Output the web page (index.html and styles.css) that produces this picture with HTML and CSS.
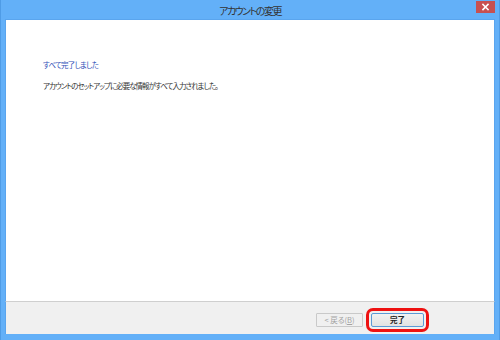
FILE: index.html
```html
<!DOCTYPE html>
<html lang="ja">
<head>
<meta charset="utf-8">
<title>アカウントの変更</title>
<link rel="stylesheet" href="styles.css">
</head>
<body>
<div class="window">
  <div class="titlebar">
    <span class="title">アカウントの変更</span>
    <svg class="close-btn" width="19" height="12" viewBox="0 0 19 12" aria-label="閉じる">
      <rect x="0" y="0" width="19" height="12" fill="#c75050"/>
      <path d="M7 3.5L12 8.5M12 3.5L7 8.5" stroke="#ffffff" stroke-width="1.6" stroke-linecap="square"/>
    </svg>
  </div>
  <div class="content">
    <h1 class="heading">すべて完了しました</h1>
    <p class="message">アカウントのセットアップに必要な情報がすべて入力されました。</p>
  </div>
  <div class="footer">
    <div class="btn btn-disabled">&lt; 戻る(<u>B</u>)</div>
    <div class="btn btn-primary">完了</div>
  </div>
</div>
</body>
</html>
```
FILE: styles.css
```css
* { box-sizing: border-box; }
html, body { margin: 0; padding: 0; }
body {
  width: 500px;
  height: 340px;
  overflow: hidden;
  font-family: "Noto Sans CJK JP", "Noto Sans", sans-serif;
  font-feature-settings: "palt";
}
.window {
  width: 500px;
  height: 340px;
  background: #63b0f8;
  border-left: 1px solid #4f9ce6;
  border-right: 1px solid #4f9ce6;
  display: flex;
  flex-direction: column;
  position: relative;
}
.titlebar {
  height: 19px;
  display: flex;
  align-items: center;
  justify-content: center;
}
.title {
  font-size: 10px;
  letter-spacing: -1.5px;
  color: #333333;
  line-height: 1;
  padding-top: 2px;
}
.close-btn {
  position: absolute;
  top: 1px;
  right: 4px;
  display: block;
}
.content {
  flex: 1;
  background: #ffffff;
  margin: 0 4px;
  padding: 39px 0 0 37px;
  border-top: 1px solid #5aa5ee;
  border-left: 1px solid #5aa5ee;
  border-right: 1px solid #5aa5ee;
}
.heading {
  margin: 0;
  font-size: 7.5px;
  letter-spacing: -0.8px;
  font-weight: normal;
  color: #2f50b8;
  line-height: 12px;
}
.message {
  margin: 9px 0 0;
  font-size: 7.5px;
  letter-spacing: -1px;
  color: #333333;
  line-height: 12px;
}
.footer {
  height: 33px;
  background: #f0f0f0;
  border-top: 1px solid #cfcfcf;
  margin: 0 4px 6px;
  border-left: 1px solid #5aa5ee;
  border-right: 1px solid #5aa5ee;
  display: flex;
  justify-content: flex-end;
  align-items: flex-start;
  padding: 11px 70px 0 0;
  gap: 8px;
}
.btn {
  height: 14px;
  font-size: 7.5px;
  line-height: 1;
  border-radius: 1px;
  display: flex;
  align-items: center;
  justify-content: center;
}
.btn-disabled {
  width: 47px;
  color: #a3a3a3;
  background: #f0f0f0;
  border: 1px solid #c9c9c9;
}
.btn-primary {
  width: 53px;
  color: #222222;
  font-weight: bold;
  background: linear-gradient(#f2f2f2, #e2e2e2);
  border: 1px solid #5b9ad6;
  outline: 3px solid #ee1111;
  outline-offset: 2px;
  border-radius: 2px;
}
```
